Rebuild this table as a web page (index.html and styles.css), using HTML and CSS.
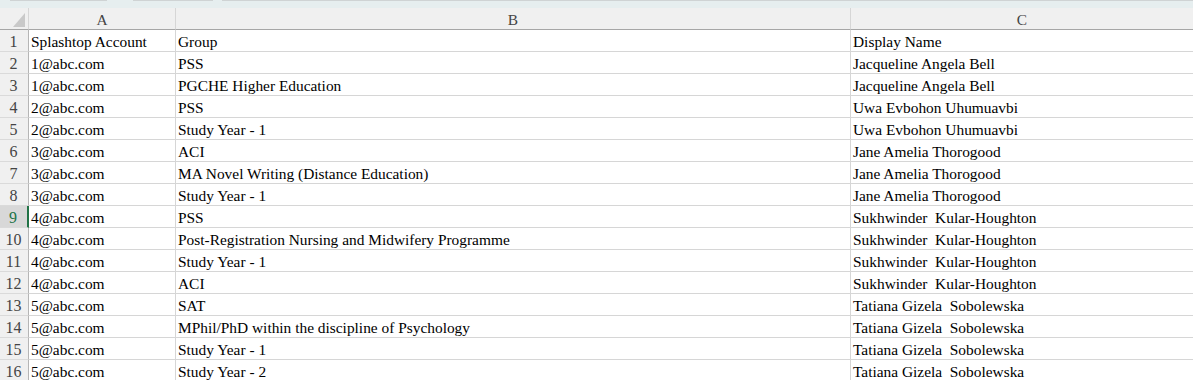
FILE: index.html
```html
<!DOCTYPE html>
<html>
<head>
<meta charset="utf-8">
<link rel="stylesheet" href="styles.css">
</head>
<body>
<div class="topstrip">
  <div class="tab t1"></div>
  <div class="tab t2"></div>
  <div class="tab t3"></div>
</div>
<div class="sheet">
  <div class="corner"><svg width="12" height="14" viewBox="0 0 12 14"><polygon points="12,0 12,14 0,14" fill="#c9c9c9"/></svg></div>
  <div class="colhead">A</div>
  <div class="colhead">B</div>
  <div class="colhead last">C</div>

  <div class="rowhead">1</div><div class="cell">Splashtop Account</div><div class="cell">Group</div><div class="cell last">Display Name</div>
  <div class="rowhead">2</div><div class="cell">1@abc.com</div><div class="cell">PSS</div><div class="cell last">Jacqueline Angela Bell</div>
  <div class="rowhead">3</div><div class="cell">1@abc.com</div><div class="cell">PGCHE Higher Education</div><div class="cell last">Jacqueline Angela Bell</div>
  <div class="rowhead">4</div><div class="cell">2@abc.com</div><div class="cell">PSS</div><div class="cell last">Uwa Evbohon Uhumuavbi</div>
  <div class="rowhead">5</div><div class="cell">2@abc.com</div><div class="cell">Study Year - 1</div><div class="cell last">Uwa Evbohon Uhumuavbi</div>
  <div class="rowhead">6</div><div class="cell">3@abc.com</div><div class="cell">ACI</div><div class="cell last">Jane Amelia Thorogood</div>
  <div class="rowhead">7</div><div class="cell">3@abc.com</div><div class="cell">MA Novel Writing (Distance Education)</div><div class="cell last">Jane Amelia Thorogood</div>
  <div class="rowhead">8</div><div class="cell">3@abc.com</div><div class="cell">Study Year - 1</div><div class="cell last">Jane Amelia Thorogood</div>
  <div class="rowhead active">9</div><div class="cell">4@abc.com</div><div class="cell">PSS</div><div class="cell last">Sukhwinder&nbsp; Kular-Houghton</div>
  <div class="rowhead">10</div><div class="cell">4@abc.com</div><div class="cell">Post-Registration Nursing and Midwifery Programme</div><div class="cell last">Sukhwinder&nbsp; Kular-Houghton</div>
  <div class="rowhead">11</div><div class="cell">4@abc.com</div><div class="cell">Study Year - 1</div><div class="cell last">Sukhwinder&nbsp; Kular-Houghton</div>
  <div class="rowhead">12</div><div class="cell">4@abc.com</div><div class="cell">ACI</div><div class="cell last">Sukhwinder&nbsp; Kular-Houghton</div>
  <div class="rowhead">13</div><div class="cell">5@abc.com</div><div class="cell">SAT</div><div class="cell last">Tatiana Gizela&nbsp; Sobolewska</div>
  <div class="rowhead">14</div><div class="cell">5@abc.com</div><div class="cell">MPhil/PhD within the discipline of Psychology</div><div class="cell last">Tatiana Gizela&nbsp; Sobolewska</div>
  <div class="rowhead">15</div><div class="cell">5@abc.com</div><div class="cell">Study Year - 1</div><div class="cell last">Tatiana Gizela&nbsp; Sobolewska</div>
  <div class="rowhead">16</div><div class="cell">5@abc.com</div><div class="cell">Study Year - 2</div><div class="cell last">Tatiana Gizela&nbsp; Sobolewska</div>
</div>
</body>
</html>
```
FILE: styles.css
```css
html, body {
  margin: 0;
  padding: 0;
  background: #ffffff;
  overflow: hidden;
}
body {
  font-family: "Liberation Serif", "Times New Roman", serif;
  font-size: 15.4px;
  color: #000;
}
.topstrip {
  height: 8px;
  background: #e6eeef;
  display: flex;
}
.tab {
  height: 1px;
  background: #cfd3d4;
}
.t1 { margin-left: 10px; width: 97px; }
.t2 { margin-left: 26px; width: 80px; }
.t3 { margin-left: 9px; flex: 1; }
.sheet {
  display: grid;
  grid-template-columns: 29px 147px 675px 1fr;
  grid-auto-rows: 22px;
}
.corner {
  background: #f0f0f0;
  border-right: 1px solid #d6d6d6;
  border-bottom: 1px solid #a6a6a6;
  display: flex;
  align-items: flex-end;
  justify-content: flex-end;
  padding: 0 3px 2px 0;
  box-sizing: border-box;
}
.corner svg { display: block; }
.colhead {
  background: #f0f0f0;
  border-right: 1px solid #d6d6d6;
  border-bottom: 1px solid #a6a6a6;
  display: flex;
  align-items: center;
  justify-content: center;
  color: #444;
  font-size: 15.4px;
  box-sizing: border-box;
  padding-top: 2px;
}
.rowhead {
  background: #f0f0f0;
  border-right: 1px solid #b5b5b5;
  border-bottom: 1px solid #dadada;
  display: flex;
  align-items: center;
  justify-content: center;
  color: #444;
  font-size: 16px;
  box-sizing: border-box;
  padding-top: 3px;
  padding-right: 1px;
}
.rowhead.active {
  background: #d8d8d8;
  color: #217346;
  border-right: 2px solid #217346;
}
.cell {
  border-right: 1px solid #d6d6d6;
  border-bottom: 1px solid #d6d6d6;
  display: flex;
  align-items: center;
  padding-left: 2px;
  padding-top: 3px;
  white-space: nowrap;
  overflow: hidden;
  box-sizing: border-box;
}
.last { border-right: none; }
```
